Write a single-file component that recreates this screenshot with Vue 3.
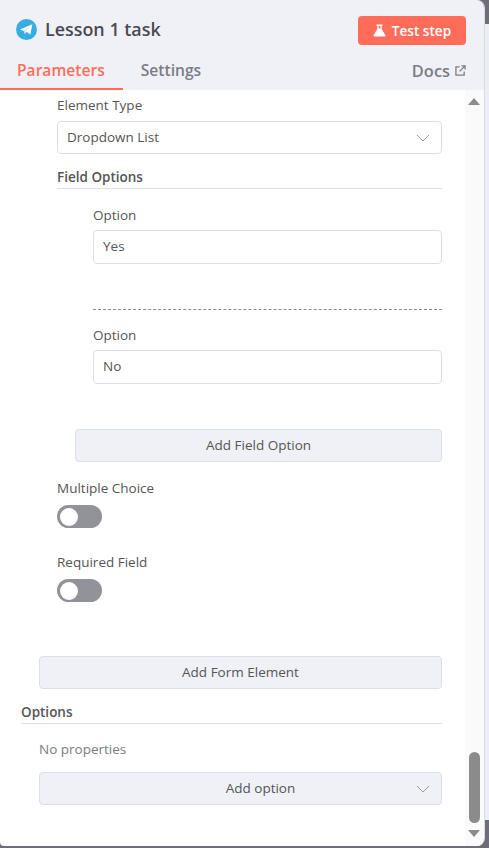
<script setup>
const fieldOptions = ['Yes', 'No']
const toggles = ['Multiple Choice', 'Required Field']
</script>

<template>
  <div class="stage">
    <div class="panel">
      <!-- Header -->
      <div class="header">
        <div class="title-row">
          <div class="title-left">
            <svg class="tg-icon" viewBox="0 0 20 20" width="21" height="21">
              <circle cx="10" cy="10" r="10" fill="#37aee2" />
              <path d="M3.8 9.9 15.6 5 13.7 14.8 9.9 12.2 8.3 14.4 7.5 11.4Z" fill="#fff" />
              <path d="M7.5 11.4 13.4 7 9.2 11.5 8.3 14.4Z" fill="#c8daea" />
            </svg>
            <span class="title">Lesson 1 task</span>
          </div>
          <button class="test-btn">
            <svg viewBox="0 0 13 13" width="13" height="13">
              <path d="M3.4.6h6.2v1.3H8.7v3l3.6 6c.5.9 0 1.7-1 1.7H1.7c-1 0-1.5-.8-1-1.7l3.6-6v-3h-.9Z" fill="#fff" />
              <path d="M5.6 1.9h1.8v2.6H5.6Z" fill="#ff6d5a" />
            </svg>
            Test step
          </button>
        </div>
        <div class="tabs">
          <div class="tab active">Parameters</div>
          <div class="tab">Settings</div>
          <div class="docs">
            Docs
            <svg viewBox="0 0 12 12" width="11" height="11" fill="none" stroke="#7b7c85" stroke-width="1.4">
              <path d="M5 2H1v9h9V7" />
              <path d="M5 7 11 1M7 1h4v4" />
            </svg>
          </div>
        </div>
      </div>

      <!-- Body -->
      <div class="body">
        <div class="content">
          <div class="element">
            <label class="field-label">Element Type</label>
            <div class="input select">
              Dropdown List
              <svg class="chevron" viewBox="0 0 14 8" width="14" height="8">
                <path d="M1 1l6 6 6-6" fill="none" stroke="#9a9ba3" stroke-width="1" />
              </svg>
            </div>

            <div class="section-title">Field Options</div>
            <div class="options">
              <div v-for="(opt, i) in fieldOptions" :key="opt" class="option" :class="{ divided: i > 0 }">
                <label class="field-label">Option</label>
                <div class="input">{{ opt }}</div>
              </div>
            </div>
            <button class="add-btn field-btn">Add Field Option</button>

            <div v-for="t in toggles" :key="t" class="toggle-row">
              <label class="field-label">{{ t }}</label>
              <div class="toggle"><span class="knob"></span></div>
            </div>
          </div>

          <button class="add-btn form-btn">Add Form Element</button>

          <div class="options-title">Options</div>
          <div class="no-props">No properties</div>
          <button class="add-btn option-btn">
            Add option
            <svg class="chevron" viewBox="0 0 14 8" width="14" height="8">
              <path d="M1 1l6 6 6-6" fill="none" stroke="#9a9ba3" stroke-width="1" />
            </svg>
          </button>
        </div>

        <!-- Scrollbar -->
        <div class="scrollbar">
          <span class="arrow up"></span>
          <span class="thumb"></span>
          <span class="arrow down"></span>
        </div>
      </div>
    </div>

    <!-- Edge of the canvas behind the panel -->
    <div class="edge">
      <span class="edge-top"></span>
      <span class="edge-light"></span>
    </div>
  </div>
</template>

<style>
html,
body {
  margin: 0;
  background: #6f6d77;
}
</style>

<style scoped>
.stage {
  width: 489px;
  height: 848px;
  display: flex;
  background: #6f6d77;
  overflow: hidden;
}

.panel {
  width: 485px;
  height: 846px;
  box-sizing: border-box;
  flex-shrink: 0;
  display: flex;
  flex-direction: column;
  border-right: 1px solid #d9dbe6;
  border-radius: 0 8px 8px 4px;
  font-family: 'Open Sans', sans-serif;
  color: #555;
  overflow: hidden;
}

.edge {
  flex: 1;
  display: flex;
  flex-direction: column;
}

.edge-top {
  height: 24px;
}

.edge-light {
  height: 796px;
  background: #eceef5;
}

.header {
  background: #f0f1f7;
  height: 90px;
  flex-shrink: 0;
}

.title-row {
  display: flex;
  justify-content: space-between;
  align-items: center;
  padding: 16px 18px 0 16px;
}

.title-left {
  display: flex;
  align-items: center;
  gap: 8px;
  margin-top: -3px;
}

.title {
  font-size: 17.9px;
  font-weight: 600;
  color: #4a4a54;
}

.test-btn {
  display: flex;
  align-items: center;
  justify-content: center;
  gap: 6px;
  width: 108px;
  height: 29px;
  padding: 0;
  border: none;
  border-radius: 4px;
  background: #ff6d5a;
  color: #fff;
  font-family: inherit;
  font-size: 13.6px;
  font-weight: 600;
}

.tabs {
  display: flex;
  align-items: flex-end;
  height: 45px;
  padding-right: 18px;
  box-sizing: border-box;
}

.tab {
  font-size: 15.6px;
  line-height: 21px;
  font-weight: 600;
  color: #7b7c85;
  padding-bottom: 9px;
}

.tab.active {
  color: #ff6d5a;
  border-bottom: 2px solid #ff6d5a;
  padding: 0 18px 7px 17px;
  margin-right: 18px;
}

.docs {
  margin-left: auto;
  display: flex;
  align-items: center;
  gap: 5px;
  font-size: 16.4px;
  line-height: 21px;
  font-weight: 600;
  color: #7b7c85;
  padding-bottom: 9px;
}

.body {
  flex: 1;
  display: flex;
  background: #fff;
  min-height: 0;
}

.content {
  flex: 1;
  padding: 6px 0 0 21px;
  width: 0;
  box-sizing: border-box;
}

.element {
  padding-left: 36px;
  padding-right: 23px;
}

.field-label {
  display: block;
  font-size: 13.5px;
  line-height: 18px;
  color: #555;
}

.input {
  position: relative;
  height: 33px;
  box-sizing: border-box;
  margin-top: 7px;
  padding: 0 9px;
  display: flex;
  align-items: center;
  border: 1px solid #dbdfe7;
  border-radius: 4px;
  background: #fff;
  font-size: 13.5px;
  color: #555;
}

.select {
  padding-bottom: 2px;
}

.option .input {
  margin-top: 6px;
  height: 34px;
  padding-bottom: 2px;
}

.chevron {
  position: absolute;
  right: 11px;
  top: 50%;
  margin-top: -4px;
}

.section-title {
  margin-top: 14px;
  padding-bottom: 2px;
  font-size: 13.5px;
  line-height: 18px;
  font-weight: 600;
  border-bottom: 1px solid #dbdfe7;
}

.options {
  padding-left: 36px;
}

.option {
  padding-top: 17px;
}

.option.divided {
  margin-top: 45px;
  border-top: 1px dashed #8a8a90;
  padding-top: 16px;
}

.add-btn {
  position: relative;
  display: block;
  height: 33px;
  box-sizing: border-box;
  padding-bottom: 3px;
  border: 1px solid #dbdfe7;
  border-radius: 4px;
  background: #f0f1f7;
  color: #555;
  font-family: inherit;
  font-size: 13.5px;
  text-align: center;
}

.field-btn {
  width: 367px;
  margin: 45px 0 0 18px;
}

.toggle-row {
  margin-top: 17px;
}

.toggle-row + .toggle-row {
  margin-top: 25px;
}

.toggle {
  width: 45px;
  height: 23px;
  margin-top: 8px;
  border-radius: 12px;
  background: #929299;
  position: relative;
}

.knob {
  position: absolute;
  left: 3px;
  top: 2.5px;
  width: 18px;
  height: 18px;
  border-radius: 50%;
  background: #fff;
}

.form-btn {
  width: 403px;
  margin: 54px 0 0 18px;
}

.options-title {
  width: 421px;
  margin-top: 14px;
  padding-bottom: 2px;
  font-size: 13.5px;
  line-height: 18px;
  font-weight: 600;
  border-bottom: 1px solid #dbdfe7;
}

.no-props {
  margin: 16px 0 0 18px;
  font-size: 13.5px;
  line-height: 18px;
  color: #7b7c85;
}

.option-btn {
  width: 403px;
  margin: 14px 0 0 18px;
  padding-left: 46px;
}

.scrollbar {
  width: 19px;
  flex-shrink: 0;
  background: #fafafa;
  position: relative;
}

.arrow {
  position: absolute;
  left: 3px;
  width: 0;
  height: 0;
  border-left: 6.5px solid transparent;
  border-right: 6.5px solid transparent;
}

.arrow.up {
  top: 8px;
  border-bottom: 7px solid #8b8b8b;
}

.arrow.down {
  bottom: 9px;
  border-top: 7px solid #8b8b8b;
}

.thumb {
  position: absolute;
  left: 4px;
  width: 11px;
  top: 662px;
  height: 71px;
  border-radius: 6px;
  background: #8b8b8b;
}
</style>
